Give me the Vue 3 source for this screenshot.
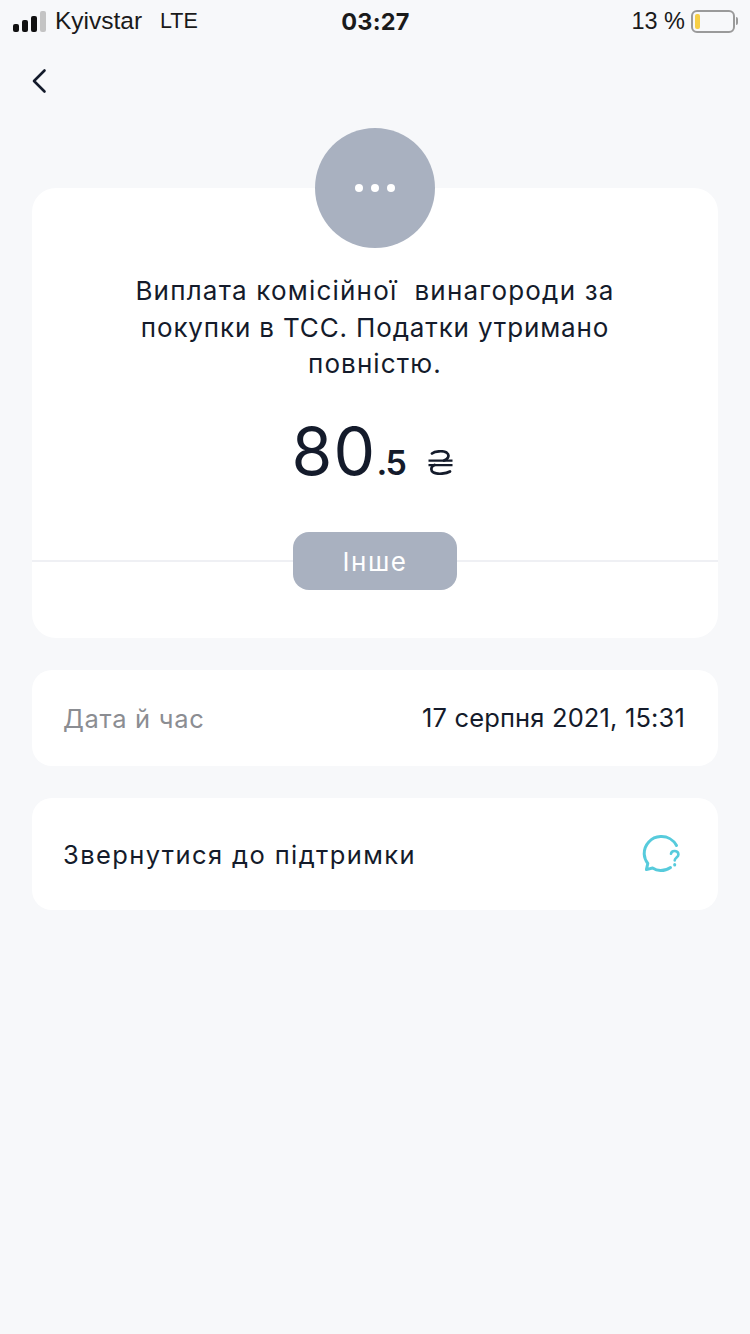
<script setup>
const bars = [8, 12, 16, 21]
const titleLines = [
  { text: 'Виплата комісійної\u00a0 винагороди за', spacing: '1.2px' },
  { text: 'покупки в ТСС. Податки утримано', spacing: '0.85px' },
  { text: 'повністю.', spacing: '1.1px' },
]
</script>

<template>
  <div class="page">
    <header class="status">
      <div class="status-left">
        <div class="signal">
          <i v-for="(h, n) in bars" :key="n" :class="{ off: n === 3 }" :style="{ height: h + 'px' }"></i>
        </div>
        <span class="carrier">Kyivstar</span>
        <span class="net">LTE</span>
      </div>
      <div class="clock">03:27</div>
      <div class="status-right">
        <span>13 %</span>
        <div class="battery"><b></b></div>
        <div class="nub"></div>
      </div>
    </header>

    <nav class="nav">
      <svg width="16" height="26" viewBox="0 0 16 26"><path d="M13.5 2.5 L3 13 L13.5 23.5" fill="none" stroke="#141b2b" stroke-width="2.6" stroke-linecap="round" stroke-linejoin="round"/></svg>
    </nav>

    <main class="content">
      <section class="card hero">
        <div class="avatar"><i></i><i></i><i></i></div>
        <p class="title">
          <span v-for="(line, n) in titleLines" :key="n" :style="{ letterSpacing: line.spacing }">{{ line.text }}</span>
        </p>
        <div class="amount">
          <span class="whole">80</span><span class="frac">.5</span>
          <svg class="cur" width="25" height="25" viewBox="0 0 25 25" fill="none" stroke="#141b2b" stroke-width="2.7" stroke-linecap="round">
            <path d="M4 3.5 C7 1 15 0.5 18.5 2.5 C22 5 20.5 9 16 10.5"/>
            <path d="M6.5 15 C2.5 16.5 2.5 21 5.5 22.5 C9 24.5 18 24 22 21.5"/>
            <path d="M0.5 10.7 H24.5 M0.5 15.2 H24.5" stroke-width="2.2" stroke-linecap="butt"/>
          </svg>
        </div>
        <div class="divider"><span class="tag">Інше</span></div>
      </section>

      <section class="card row date">
        <span class="muted">Дата й час</span>
        <span class="value stamp">17 серпня 2021, 15:31</span>
      </section>

      <section class="card row support">
        <span class="value wide">Звернутися до підтримки</span>
        <svg width="40" height="40" viewBox="0 0 40 40" fill="none" stroke="#57cbdc" stroke-width="3" stroke-linecap="round" stroke-linejoin="round">
          <path d="M34.5 11.5 A17 17 0 0 0 18.5 2.6 A17 17 0 0 0 2.2 20 A17 17 0 0 0 5.8 29.5 L4.4 35.6 L10.6 34 A17 17 0 0 0 18.5 36.6 A17 17 0 0 0 28.5 33.5"/>
          <path d="M29 19.8 C29.5 15.8 36.6 16 36.4 20.6 C36.3 23.4 32.8 23.6 32.7 26.4" stroke-width="2.6"/>
          <path d="M32.7 30.6 L32.7 31" stroke-width="3"/>
        </svg>
      </section>
    </main>
  </div>
</template>

<style>
html, body { margin: 0; background: #f7f8fa; }
</style>

<style scoped>
.page {
  width: 750px;
  height: 1334px;
  overflow: hidden;
  background: #f7f8fa;
  font-family: Inter, "Noto Sans", sans-serif;
  color: #141b2b;
}
.status {
  height: 42px;
  display: grid;
  grid-template-columns: 1fr auto 1fr;
  align-items: center;
  padding: 0 12px 0 13px;
  color: #1a1a1a;
  font-family: "Liberation Sans", sans-serif;
  font-size: 24px;
}
.status-left { display: flex; align-items: center; }
.signal { display: flex; align-items: flex-end; gap: 3.5px; height: 21px; margin: 0 9px 0 0; width: 33px; }
.signal i { flex: 0 0 5.5px; border-radius: 2px; background: #111; }
.signal i.off { background: #c4c4c4; }
.carrier { width: 105px; font-size: 24.5px; }
.net { font-size: 21.5px; }
.clock { font-weight: 700; font-size: 23.5px; letter-spacing: 0.2px; font-family: Inter, sans-serif; }
.status-right { display: flex; align-items: center; justify-content: flex-end; }
.status-right span { font-size: 23.5px; margin-right: 6px; }
.battery {
  width: 44px; height: 23px; box-sizing: border-box;
  border: 2px solid #9a9a9a; border-radius: 6px; padding: 2px 2px;
}
.battery b { display: block; width: 5px; height: 15px; background: #f7cf46; border-radius: 2px; }
.nub { width: 2px; height: 8px; background: #9a9a9a; border-radius: 0 2px 2px 0; margin-left: 1px; }
.nav { height: 60px; padding: 26px 0 0 31px; box-sizing: border-box; }
.content { padding: 86px 32px 0; display: flex; flex-direction: column; }
.card { background: #fff; }
.hero {
  position: relative;
  height: 450px;
  border-radius: 24px;
  box-sizing: border-box;
  padding-top: 85px;
  text-align: center;
}
.avatar {
  position: absolute;
  left: 283px; top: -60px;
  width: 120px; height: 120px;
  border-radius: 50%;
  background: #a9b1c0;
  display: flex; align-items: center; justify-content: center; gap: 8px;
}
.avatar i { width: 8px; height: 8px; border-radius: 50%; background: #fff; margin-top: -1px; }
.title {
  margin: 0 auto;
  font-size: 26px;
  line-height: 36.5px;
  color: #141b2b;
}
.title span { display: block; white-space: nowrap; }
.amount {
  margin-top: 30px;
  height: 76px;
  display: flex; justify-content: center; align-items: baseline;
  line-height: 76px;
  padding-right: 5px;
}
.whole { font-size: 66px; font-weight: 400; letter-spacing: 1.2px; }
.frac { font-size: 34px; font-weight: 600; letter-spacing: -1.5px; }
.cur { margin-left: 23px; align-self: flex-end; margin-bottom: 14px; }
.divider {
  position: absolute;
  left: 0; right: 0; top: 372px;
  height: 2px;
  background: #eff0f4;
}
.tag {
  position: absolute;
  left: 261px; top: -28px;
  width: 164px; height: 58px;
  border-radius: 16px;
  background: #a9b1c0;
  color: #fff;
  font-size: 26px;
  letter-spacing: 1.5px;
  display: flex; align-items: center; justify-content: center;
}
.row {
  display: flex; align-items: center; justify-content: space-between;
  border-radius: 20px;
  padding: 0 33px 0 31px;
}
.date { height: 96px; margin-top: 32px; }
.support { height: 112px; margin-top: 32px; padding-right: 36px; }
.muted { color: #8b8d92; font-size: 25.5px; letter-spacing: 0.7px; }
.value { font-size: 25.5px; color: #141b2b; }
.stamp { letter-spacing: 0.15px; margin-top: -2px; }
.wide { letter-spacing: 1.4px; }
</style>
